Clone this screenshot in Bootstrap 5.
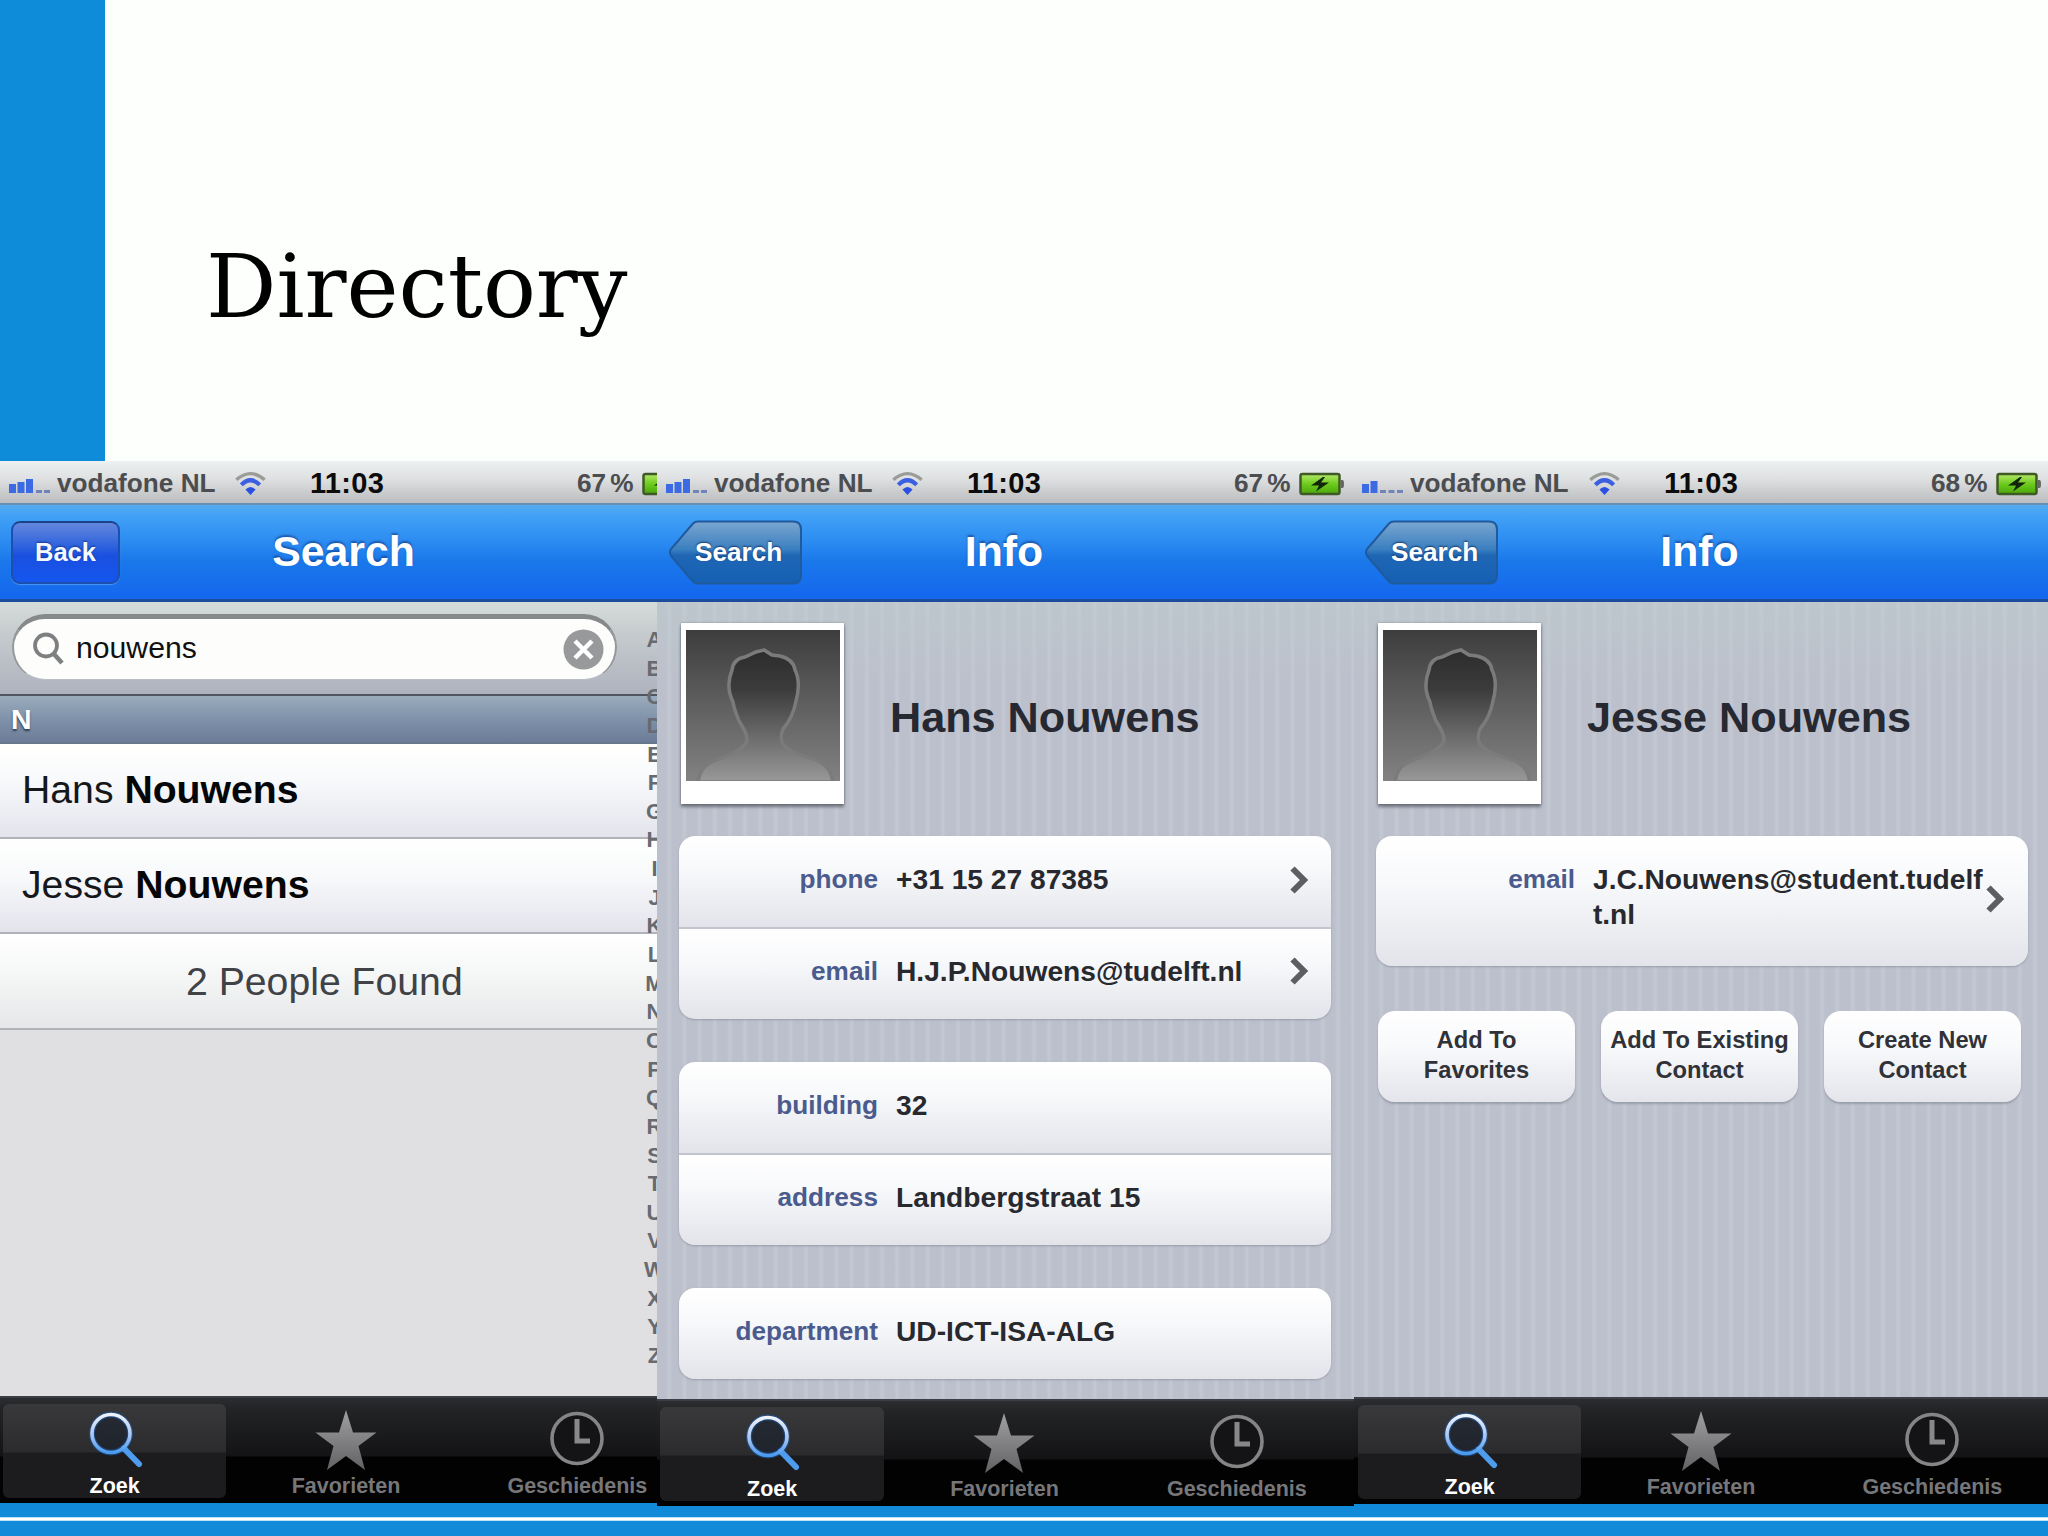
<!DOCTYPE html>
<html lang="nl">
<head>
<meta charset="utf-8">
<meta name="viewport" content="width=device-width, initial-scale=1">
<title>Directory</title>
<link href="https://cdn.jsdelivr.net/npm/bootstrap@5.3.0/dist/css/bootstrap.min.css" rel="stylesheet">
<style>
html,body{margin:0;height:100%;overflow:hidden}
body{font-family:"Liberation Sans",Arial,sans-serif;background:#118bd9;color:#000}
.slide{width:2048px;height:1536px;overflow:hidden}
.slide-top{height:461px;background:#fdfffc}
.accent{width:105px;background:#0f8cd9}
.slide-title{font:400 88px/1 "DejaVu Serif",serif;margin:243px 0 0 101px;letter-spacing:-.1px}
.foot-line{height:4px;background:linear-gradient(#8ccaf0,#fff 30% 70%,#8ccaf0);margin-top:-3px}
.phones{height:1059px}
.phone{overflow:hidden;line-height:1}
.p-one{width:657px;height:1042px}
.p-two{width:697px;height:1045px}
.p-three{width:694px;height:1043px}
.screen{width:694px}
.p-two .screen{width:697px}
.status{display:grid;grid-template-columns:57px 177px 76px 267px 65px auto;height:44px;align-items:center;padding-top:3px;
 font-size:26.2px;font-weight:700;color:#4b4d50;background:linear-gradient(#edf1f1,#dfe1e2 40%,#bdbfc0 96%);border-bottom:2px solid #668fb4}
.p-three .status{grid-template-columns:56px 178px 76px 267px 65px auto}
.status svg{display:block}
.clock-time{font-size:29px;color:#0c0c0c;letter-spacing:.3px}
.navtop{height:97px;background:linear-gradient(#58acee 0,#43a2f6 10%,#2f8ff2 35%,#1a78ea 60%,#1568ee 97%);border-bottom:3px solid #1c4c9c;
 display:grid;grid-template-columns:150px 1fr 150px;align-items:center;color:#fff;font-weight:700}
.p-one .navtop{padding-right:7px}
.p-two .navtop,.p-three .navtop{padding-right:3px}
.nav-name{font-size:42.8px;text-align:center;text-shadow:0 -2px 2px rgba(10,50,120,.55);padding-bottom:1px}
.back-sq{width:109px;height:63px;margin-left:11px;border-radius:9px;padding:0;border:2px solid #1d4fae;border-top-color:#1b4488;font-size:25.5px;font-weight:700;color:#f4f8ff;
 background:linear-gradient(#6487dc,#2d62de 40%,#1a50e0 55%,#1456ee);text-shadow:0 -1px 2px #123a90;box-shadow:0 1px 1px rgba(130,190,255,.5)}
.back-arrow{position:relative;width:134px;height:65px;margin-left:11px;display:flex;align-items:center;padding-left:27px;font-size:26.2px;text-shadow:0 -1px 2px #123a70}
.p-three .back-arrow{margin-left:10px}
.back-arrow svg{position:absolute;left:0;top:0}
.back-arrow span{position:relative}
.find-bar{height:92px;background:linear-gradient(#d5ddda,#c3c9cc 40%,#aeb2be);padding:12px 0 0 12px}
.find-box{width:605px;height:66px;border-radius:33px;background:#fdfefc;border:2px solid #94989b;border-top:5px solid #868989;border-bottom:1px solid #b9bdc6;font-size:30.2px;color:#111;padding:0 11px 0 18px}
.find-box span{margin-left:10px;margin-top:-1px}
.sect{height:50px;background:linear-gradient(#9aabbb,#8295ac 45%,#6b7c98);border-top:2px solid #4f565f;border-bottom:2px solid #66778d;font-size:28.5px;font-weight:700;color:#fff;text-shadow:0 2px 2px #333f4d;padding:9px 0 0 11px}
.hit{height:95.2px;font-size:39.2px;background:linear-gradient(#fefffd,#f8f9fb 40%,#e3e3ec);border-bottom:2px solid #b2b3b9;padding:26px 0 0 22px;color:#15171a}
.hit b{color:#050608}
.hit.total{color:#404246;padding:28px 0 0 186px;background:linear-gradient(#fff,#f6f7f7 40%,#e5e7e8)}
.list-body{position:relative;background:#e0dfe2}
.letters{position:absolute;left:639px;top:24px;width:31px;font-size:22px;font-weight:700;color:#676a70;text-align:center;line-height:28.64px}
.info-body{background:linear-gradient(rgba(190,205,205,.5),rgba(190,205,205,0) 80px),repeating-linear-gradient(90deg,#bcc0cc 0 9px,#c2c7d1 11.5px 13px,#bcc0cc 15.2px);padding:21px 0 0 24px}
.photo{width:163px;height:181px;background:#fff;padding:7px 4px 0 5px;box-shadow:0 3px 3px rgba(60,65,75,.6),0 0 2px rgba(80,85,95,.5)}
.photo svg{display:block}
.full-name{font-size:43.2px;font-weight:700;color:#262931;margin:0 0 0 46px;padding-top:8px;line-height:1}
.group-box{width:652px;margin:43px 0 0 -2px;border-radius:16px;overflow:hidden;box-shadow:0 1px 2px rgba(120,125,140,.55)}
.first-box{margin-top:32px}
.line-row{height:91px;background:linear-gradient(#fff,#f8f9fb 35%,#e3e4ea);font-size:28.2px;font-weight:700;color:#27292e;padding-bottom:4px}
.line-row + .line-row{border-top:2px solid #c3c5ce;height:92px;padding-bottom:6px}
.line-row .key{width:199px;text-align:right;font-size:26.2px;color:#4b5b8d;margin-right:18px}
.line-row .arrow{margin:0 22px 0 auto}
.long{height:130px;align-items:flex-start!important;padding-top:26px;letter-spacing:-.05px}
.long .key{padding-top:4px}
.long .val{line-height:34.5px;white-space:nowrap}
.long .arrow{margin-top:23px;margin-left:2px;margin-right:0}
.acts{margin:45px 0 0 0;gap:26px}
.act{width:197px;height:91px;border-radius:17px;border:0;padding:0 0 3px;background:linear-gradient(#fff,#f8f9fb 40%,#e4e5eb);font-size:23.7px;font-weight:700;line-height:30px;color:#303238;box-shadow:0 2px 2px rgba(120,125,140,.5);white-space:nowrap}
.tabs-bar{height:107px;background:linear-gradient(#2c2d30 0,#222325 12px,#131315 58px,#020203 59px);border-top:2px solid #3b3e44;padding-top:6px}
.tab-it{height:94px;margin:0 4px;padding-top:6px;border-radius:6px;font-size:21.5px;font-weight:700;color:#77777a;flex:1 1 0;width:0}
.p-one .tab-it,.p-two .tab-it{left:-1px;position:relative}
.tab-it.on{color:#fff;background:linear-gradient(#39393c,#2b2b2d 48px,#1c1c1e 49px)}
.tab-it svg{display:block;margin-bottom:4px}
</style>
<script src="https://cdn.jsdelivr.net/npm/bootstrap@5.3.0/dist/js/bootstrap.bundle.min.js"></script>
</head>
<body>
<svg width="0" height="0" class="position-absolute">
 <defs>
  <linearGradient id="gLens" x1="0" y1="0" x2="0" y2="1"><stop offset="0" stop-color="#eef2fb"/><stop offset=".55" stop-color="#a9c6f2"/><stop offset="1" stop-color="#4a9bf0"/></linearGradient>
  <linearGradient id="gStar" x1="0" y1="0" x2="0" y2="1"><stop offset="0" stop-color="#a0a0a2"/><stop offset="1" stop-color="#626264"/></linearGradient>
  <linearGradient id="gBatt" x1="0" y1="0" x2="0" y2="1"><stop offset="0" stop-color="#b6e86a"/><stop offset=".5" stop-color="#6ccb1c"/><stop offset="1" stop-color="#4ba70c"/></linearGradient>
  <linearGradient id="gArrow" x1="0" y1="0" x2="0" y2="1"><stop offset="0" stop-color="#7ba6d0"/><stop offset=".45" stop-color="#3a7fc0"/><stop offset=".55" stop-color="#1f66b4"/><stop offset="1" stop-color="#1560b4"/></linearGradient>
  <linearGradient id="gPhoto" x1="0" y1="0" x2="0" y2="1"><stop offset="0" stop-color="#3d3d3d"/><stop offset="1" stop-color="#828282"/></linearGradient>
  <linearGradient id="gHead" x1="0" y1="0" x2="0" y2="1"><stop offset="0" stop-color="#2c2c2c"/><stop offset=".3" stop-color="#3c3c3c"/><stop offset="1" stop-color="#999"/></linearGradient>
  <symbol id="wifi" viewBox="0 0 36 26"><path d="M2.500 9Q18-4.500 33.500 9" fill="none" stroke="#9a9c98" stroke-width="3.600"/><path d="M8 14.500Q18 4.500 28 14.500" fill="none" stroke="#3a5fe0" stroke-width="4.500"/><path d="M12.500 19.500Q18 14 23.500 19.500L18 25.500Z" fill="#2b4fe2"/></symbol>
  <symbol id="batt" viewBox="0 0 46 24"><rect x="1.500" y="2" width="39" height="20" rx="2" fill="url(#gBatt)" stroke="#3f5a26" stroke-width="2.500"/><path d="M42 8h1.500q1.500 0 1.500 4t-1.500 4H42z" fill="#666"/><path d="M24 5L12 13.500h8L17 19.500 30 10.500h-8L26 5z" fill="#10250a"/></symbol>
  <symbol id="backshape" viewBox="0 0 134 65"><path d="M25 3.500Q27 1.500 30 1.500H125Q133 1.500 133 9.500V55.500Q133 63.500 125 63.500H30Q27 63.500 25 61.500L3 36Q1 32.500 3 29Z" fill="url(#gArrow)" stroke="#1f5a9c" stroke-width="2"/></symbol>
  <symbol id="person" viewBox="0 0 154 151"><rect width="154" height="151" fill="url(#gPhoto)"/><path d="M12 152C14 139 20 133 33 129C46 124 55 120 60 113C63 107 58 99 53 91C50 83 48 79 47 72C42 62 42 50 46 40C47 32 52 28 59 27L70 22L78 20L86 25L94 26C102 28 108 32 109 40C114 50 113 60 110 71C108 82 103 92 97 99C94 107 94 113 101 118C108 124 118 126 130 130C142 135 145 142 147 152Z" fill="url(#gHead)" stroke="#7b7b7b" stroke-width="3.500"/></symbol>
  <symbol id="chev" viewBox="0 0 20 28"><path d="M3.500 2.500L15 14L3.500 25.500" fill="none" stroke="#5d5e62" stroke-width="6"/></symbol>
  <symbol id="tZoek" viewBox="0 0 64 62"><circle cx="28" cy="23.500" r="19" fill="#141d2b" fill-opacity=".5" stroke="#1a61b8" stroke-width="6" stroke-opacity=".5"/><path d="M41 38.500L56 54" stroke="#4e9cee" stroke-width="6" stroke-linecap="round"/><circle cx="28" cy="23.500" r="19" fill="none" stroke="url(#gLens)" stroke-width="3.600"/></symbol>
  <symbol id="tStar" viewBox="0 0 64 62"><path d="M32 0L39 22.500H62.500L44.500 36L51 60L32 46L13 60L19.500 36L1.500 22.500H25Z" fill="url(#gStar)"/></symbol>
  <symbol id="tClock" viewBox="0 0 64 62"><circle cx="32" cy="28.500" r="25" fill="#141416" stroke="#858587" stroke-width="3.600"/><path d="M32 9V31H45" fill="none" stroke="#88888a" stroke-width="5"/></symbol>
 </defs>
</svg>

<div class="slide d-flex flex-column">
 <header class="slide-top d-flex flex-shrink-0">
  <div class="accent"></div>
  <h1 class="slide-title">Directory</h1>
 </header>

 <main class="phones d-flex align-items-start flex-shrink-0">
  <section class="phone p-one"><div class="screen d-flex flex-column h-100">
   <div class="status">
    <svg width="52" height="18" viewBox="0 0 52 18"><g fill="#3c6ae2"><path d="M9 9h7v9H9zM17.500 7h7v11h-7zM26 4h7v14h-7z"/></g><path d="M36 15h6v3h-6zM44 15h6v3h-6z" fill="#7184b8"/></svg>
    <span>vodafone NL</span><svg width="33" height="25"><use href="#wifi"/></svg><span class="clock-time">11:03</span><span>67<span class="ms-1">%</span></span><svg width="46" height="24"><use href="#batt"/></svg>
   </div>
   <nav class="navtop"><button class="btn back-sq">Back</button><div class="nav-name">Search</div></nav>
   <div class="list-body flex-grow-1">
    <div class="find-bar"><div class="find-box d-flex align-items-center">
     <svg width="34" height="34" viewBox="0 0 34 34"><circle cx="14" cy="13.500" r="11" fill="none" stroke="#7d7f80" stroke-width="3.800"/><path d="M21.500 21.500L30 31" stroke="#7d7f80" stroke-width="4.500"/></svg>
     <span>nouwens</span>
     <svg class="ms-auto" width="41" height="41" viewBox="0 0 41 41"><circle cx="20.500" cy="20.500" r="20" fill="#97999b"/><path d="M12 12L29 29M29 12L12 29" stroke="#fff" stroke-width="4.500"/></svg>
    </div></div>
    <div class="sect">N</div>
    <div class="hit">Hans <b>Nouwens</b></div>
    <div class="hit">Jesse <b>Nouwens</b></div>
    <div class="hit total">2 People Found</div>
    <div class="letters">A<br>B<br>C<br>D<br>E<br>F<br>G<br>H<br>I<br>J<br>K<br>L<br>M<br>N<br>O<br>P<br>Q<br>R<br>S<br>T<br>U<br>V<br>W<br>X<br>Y<br>Z</div>
   </div>
   <div class="tabs-bar d-flex">
    <div class="tab-it on d-flex flex-column align-items-center"><svg width="64" height="62"><use href="#tZoek"/></svg>Zoek</div>
    <div class="tab-it d-flex flex-column align-items-center"><svg width="64" height="62"><use href="#tStar"/></svg>Favorieten</div>
    <div class="tab-it d-flex flex-column align-items-center"><svg width="64" height="62"><use href="#tClock"/></svg>Geschiedenis</div>
   </div>
  </div></section>

  <section class="phone p-two"><div class="screen d-flex flex-column h-100">
   <div class="status">
    <svg width="52" height="18" viewBox="0 0 52 18"><g fill="#3c6ae2"><path d="M9 9h7v9H9zM17.500 7h7v11h-7zM26 4h7v14h-7z"/></g><path d="M36 15h6v3h-6zM44 15h6v3h-6z" fill="#7184b8"/></svg>
    <span>vodafone NL</span><svg width="33" height="25"><use href="#wifi"/></svg><span class="clock-time">11:03</span><span>67<span class="ms-1">%</span></span><svg width="46" height="24"><use href="#batt"/></svg>
   </div>
   <nav class="navtop"><div class="back-arrow"><svg width="134" height="65"><use href="#backshape"/></svg><span>Search</span></div><div class="nav-name">Info</div></nav>
   <div class="info-body flex-grow-1">
    <div class="d-flex align-items-center"><div class="photo"><svg width="154" height="151"><use href="#person"/></svg></div><h2 class="full-name">Hans Nouwens</h2></div>
    <div class="group-box first-box">
     <div class="line-row d-flex align-items-center"><span class="key">phone</span><span>+31 15 27 87385</span><svg class="arrow" width="20" height="28"><use href="#chev"/></svg></div>
     <div class="line-row d-flex align-items-center"><span class="key">email</span><span>H.J.P.Nouwens@tudelft.nl</span><svg class="arrow" width="20" height="28"><use href="#chev"/></svg></div>
    </div>
    <div class="group-box">
     <div class="line-row d-flex align-items-center"><span class="key">building</span><span>32</span></div>
     <div class="line-row d-flex align-items-center"><span class="key">address</span><span>Landbergstraat 15</span></div>
    </div>
    <div class="group-box">
     <div class="line-row d-flex align-items-center"><span class="key">department</span><span>UD-ICT-ISA-ALG</span></div>
    </div>
   </div>
   <div class="tabs-bar d-flex">
    <div class="tab-it on d-flex flex-column align-items-center"><svg width="64" height="62"><use href="#tZoek"/></svg>Zoek</div>
    <div class="tab-it d-flex flex-column align-items-center"><svg width="64" height="62"><use href="#tStar"/></svg>Favorieten</div>
    <div class="tab-it d-flex flex-column align-items-center"><svg width="64" height="62"><use href="#tClock"/></svg>Geschiedenis</div>
   </div>
  </div></section>

  <section class="phone p-three"><div class="screen d-flex flex-column h-100">
   <div class="status">
    <svg width="52" height="18" viewBox="0 0 52 18"><g fill="#3c6ae2"><path d="M8 9h7v9H8zM16.500 6h7v12h-7z"/></g><path d="M26 15h6v3h-6zM34.500 15h6v3h-6zM43 15h6v3h-6z" fill="#7184b8"/></svg>
    <span>vodafone NL</span><svg width="33" height="25"><use href="#wifi"/></svg><span class="clock-time">11:03</span><span>68<span class="ms-1">%</span></span><svg width="46" height="24"><use href="#batt"/></svg>
   </div>
   <nav class="navtop"><div class="back-arrow"><svg width="134" height="65"><use href="#backshape"/></svg><span>Search</span></div><div class="nav-name">Info</div></nav>
   <div class="info-body flex-grow-1">
    <div class="d-flex align-items-center"><div class="photo"><svg width="154" height="151"><use href="#person"/></svg></div><h2 class="full-name">Jesse Nouwens</h2></div>
    <div class="group-box first-box">
     <div class="line-row long d-flex"><span class="key">email</span><span class="val">J.C.Nouwens@student.tudelf<br>t.nl</span><svg class="arrow" width="20" height="28"><use href="#chev"/></svg></div>
    </div>
    <div class="acts d-flex">
     <button class="btn act">Add To<br>Favorites</button>
     <button class="btn act">Add To Existing<br>Contact</button>
     <button class="btn act">Create New<br>Contact</button>
    </div>
   </div>
   <div class="tabs-bar d-flex">
    <div class="tab-it on d-flex flex-column align-items-center"><svg width="64" height="62"><use href="#tZoek"/></svg>Zoek</div>
    <div class="tab-it d-flex flex-column align-items-center"><svg width="64" height="62"><use href="#tStar"/></svg>Favorieten</div>
    <div class="tab-it d-flex flex-column align-items-center"><svg width="64" height="62"><use href="#tClock"/></svg>Geschiedenis</div>
   </div>
  </div></section>
 </main>
 <div class="foot-line"></div>
</div>
</body>
</html>
